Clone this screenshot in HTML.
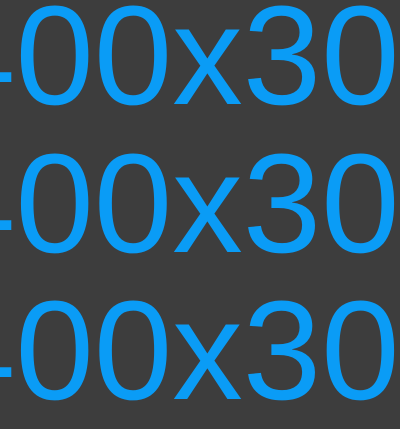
<!DOCTYPE html>
<html><head><style>
html,body{margin:0;padding:0;width:400px;height:400px;overflow:hidden;background:#3d3d3d;}
.t{position:absolute;left:-63px;top:-18px;font-family:"Liberation Sans",Arial,sans-serif;font-size:141px;line-height:147.5px;color:#0a9cf6;white-space:nowrap;}
</style></head><body>
<div class="t">400x300<br>400x300<br>400x300</div>
</body></html>
